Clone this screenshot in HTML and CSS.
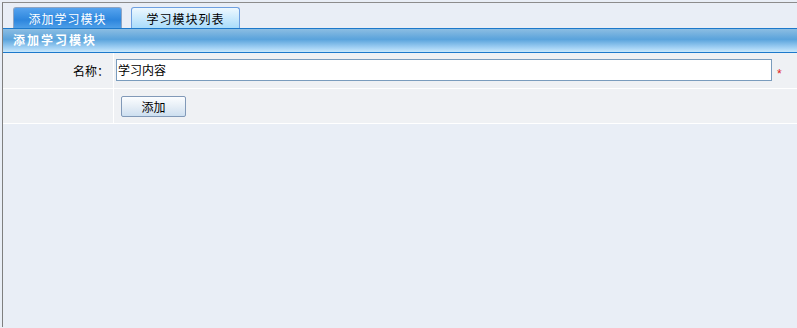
FILE: index.html
```html
<!DOCTYPE html>
<html lang="zh-CN">
<head>
    <meta charset="UTF-8">
    <title>添加学习模块</title>
    <link rel="stylesheet" href="styles.css">
</head>
<body>
    <div class="frame">
        <div class="tabs">
            <a class="tab active" href="#">添加学习模块</a>
            <a class="tab" href="#">学习模块列表</a>
        </div>
        <div class="title">添加学习模块</div>
        <div class="form">
            <div class="label">名称：</div>
            <div class="field">
                <input class="text" type="text" value="学习内容">
                <span class="req">*</span>
            </div>
            <div class="label"></div>
            <div class="field">
                <button class="btn">添加</button>
            </div>
        </div>
    </div>
</body>
</html>
```

FILE: styles.css
```css
html, body {
    height: 100%;
}
body {
    margin: 0;
    background: #e9eef6;
    font-family: "SimSun", "Noto Sans CJK SC", sans-serif;
    font-size: 12px;
    color: #000;
}
.frame {
    margin: 2px 0 0 2px;
    border-top: 1px solid #8c8c8c;
    border-left: 1px solid #7f7f7f;
    height: calc(100% - 3px);
    box-sizing: border-box;
}
.tabs {
    display: flex;
    gap: 9px;
    padding: 4px 0 0 10px;
    height: 21px;
}
.tab {
    width: 109px;
    height: 21px;
    box-sizing: border-box;
    border: 1px solid #6e9fe0;
    border-bottom: none;
    border-radius: 3px 3px 0 0;
    background: linear-gradient(#edf8ff, #a9dcfb);
    color: #000;
    text-decoration: none;
    display: flex;
    align-items: center;
    justify-content: center;
    line-height: 1;
    padding-top: 1px;
    letter-spacing: 1px;
}
.tab.active {
    border-color: #8ea5c4;
    background: linear-gradient(#56a3ee, #2d86dd 60%, #4e9fe8);
    color: #fff;
}
.title {
    height: 23px;
    border-top: 1px solid #1c79cb;
    border-bottom: 1px solid #1c79cb;
    background: linear-gradient(#8cbde2, #5aa3dc 45%, #9fcff3 80%, #c8e8fc);
    color: #fff;
    font-weight: bold;
    line-height: 22px;
    padding-left: 10px;
    letter-spacing: 2px;
}
.form {
    display: grid;
    grid-template-columns: 110px 1fr;
    grid-template-rows: 35px 34px;
    gap: 1px;
    padding-bottom: 1px;
    background: #fff;
}
.label, .field {
    background: #eff1f4;
}
.label {
    display: flex;
    align-items: center;
    justify-content: flex-end;
    padding-right: 4px;
}
.field {
    display: flex;
    align-items: center;
    padding-left: 2px;
}
.text {
    width: 656px;
    height: 22px;
    box-sizing: border-box;
    border: 1px solid #7a9cbd;
    padding: 0 1px;
    margin: 0;
    font: inherit;
    color: #000;
    outline: none;
    position: relative;
    top: -1px;
}
.req {
    color: #e02020;
    margin-left: 5px;
    font-family: "Liberation Sans", sans-serif;
    font-size: 12px;
    position: relative;
    top: 3px;
}
.btn {
    width: 65px;
    height: 21px;
    margin: 0 0 0 5px;
    border: 1px solid #8199b8;
    border-radius: 2px;
    background: linear-gradient(#fbfdff, #e6eef6 50%, #cddff0);
    font: inherit;
    color: #000;
    padding: 0;
}
```
